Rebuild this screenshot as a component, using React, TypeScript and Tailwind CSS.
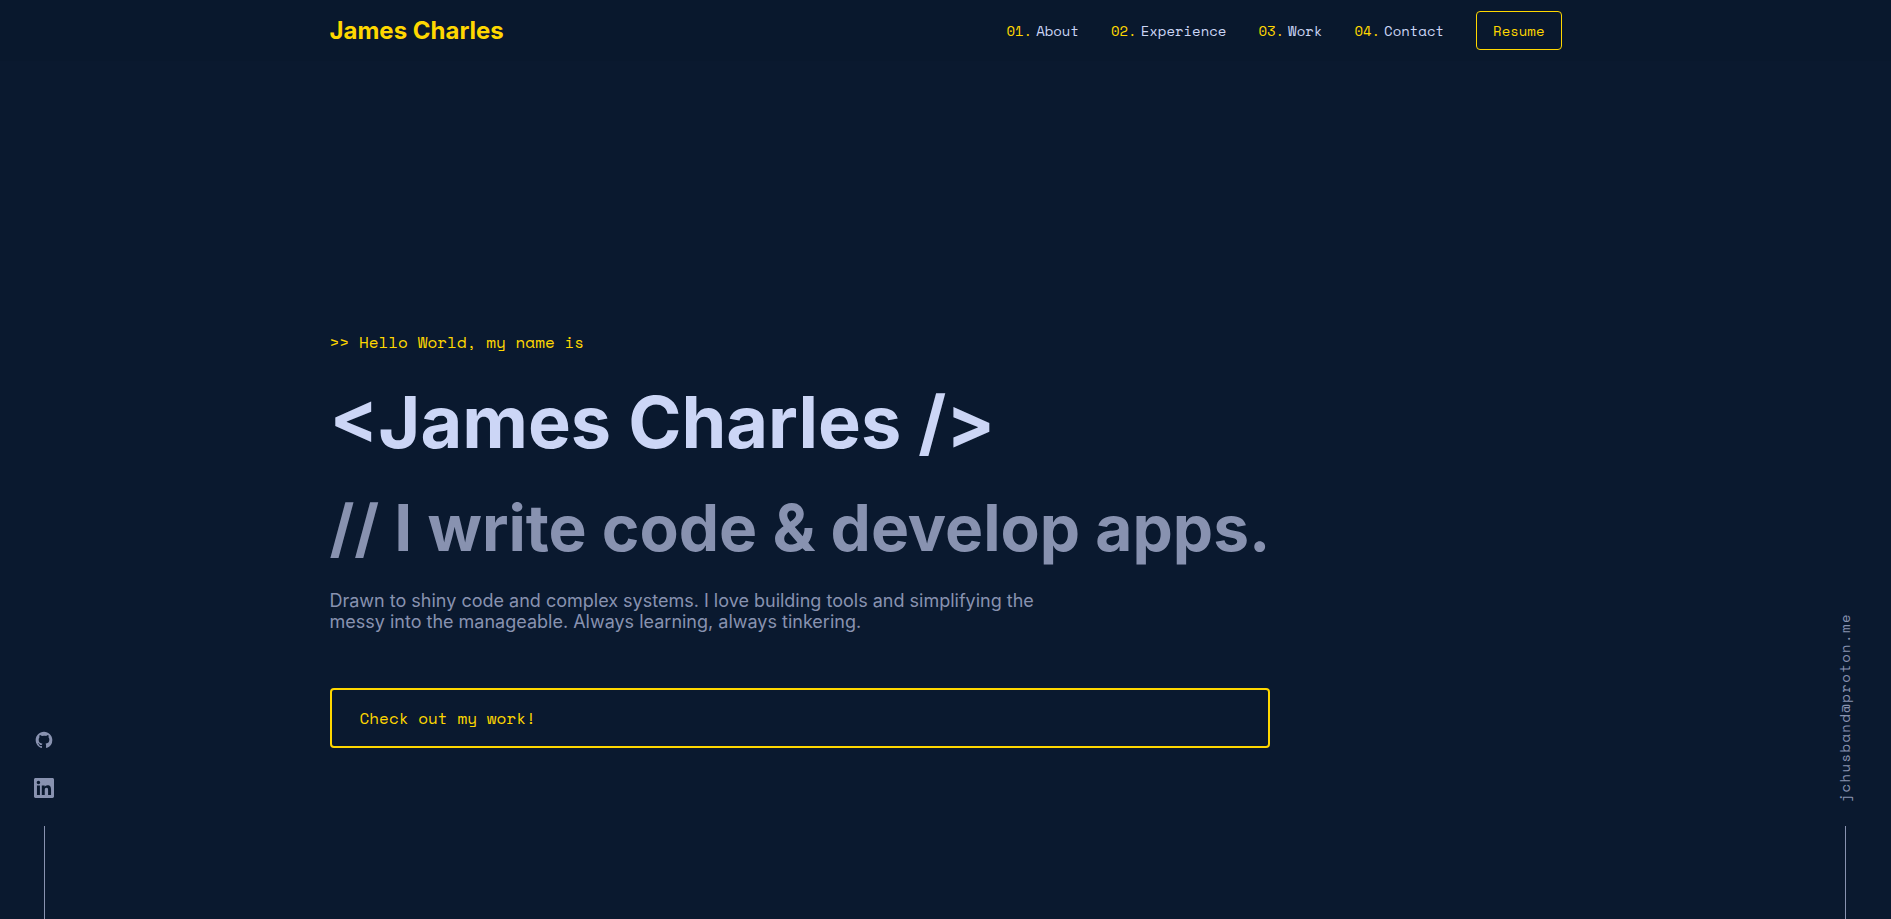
const mono = "font-['Space_Mono','DejaVu_Sans_Mono',monospace]";

const links = [
  { number: "01.", label: "About", href: "#about" },
  { number: "02.", label: "Experience", href: "#experience" },
  { number: "03.", label: "Work", href: "#work" },
  { number: "04.", label: "Contact", href: "#contact" },
];

function GithubIcon() {
  return (
    <svg viewBox="0 0 24 24" fill="currentColor" aria-hidden="true" className="size-5">
      <path
        fillRule="evenodd"
        clipRule="evenodd"
        d="M12 2C6.477 2 2 6.484 2 12.017c0 4.425 2.865 8.18 6.839 9.504.5.092.682-.217.682-.483 0-.237-.008-.868-.013-1.703-2.782.605-3.369-1.343-3.369-1.343-.454-1.158-1.11-1.466-1.11-1.466-.908-.62.069-.608.069-.608 1.003.07 1.531 1.032 1.531 1.032.892 1.53 2.341 1.088 2.91.832.092-.647.35-1.088.636-1.338-2.22-.253-4.555-1.113-4.555-4.951 0-1.093.39-1.988 1.029-2.688-.103-.253-.446-1.272.098-2.65 0 0 .84-.27 2.75 1.026A9.564 9.564 0 0112 6.844c.85.004 1.705.115 2.504.337 1.909-1.296 2.747-1.027 2.747-1.027.546 1.379.202 2.398.1 2.651.64.7 1.028 1.595 1.028 2.688 0 3.848-2.339 4.695-4.566 4.943.359.309.678.92.678 1.855 0 1.338-.012 2.419-.012 2.747 0 .268.18.58.688.482A10.019 10.019 0 0022 12.017C22 6.484 17.522 2 12 2z"
      />
    </svg>
  );
}

function LinkedinIcon() {
  return (
    <svg viewBox="0 0 24 24" fill="currentColor" aria-hidden="true" className="size-5">
      <path d="M20.447 20.452h-3.554v-5.569c0-1.328-.027-3.037-1.852-3.037-1.853 0-2.136 1.445-2.136 2.939v5.667H9.351V9h3.414v1.561h.046c.477-.9 1.637-1.85 3.37-1.85 3.601 0 4.267 2.37 4.267 5.455v6.286zM5.337 7.433c-1.144 0-2.063-.926-2.063-2.065 0-1.138.92-2.063 2.063-2.063 1.14 0 2.064.925 2.064 2.063 0 1.139-.925 2.065-2.064 2.065zm1.782 13.019H3.555V9h3.564v11.452zM22.225 0H1.771C.792 0 0 .774 0 1.729v20.542C0 23.227.792 24 1.771 24h20.451C23.2 24 24 23.227 24 22.271V1.729C24 .774 23.2 0 22.222 0h.003z" />
    </svg>
  );
}

function Header() {
  return (
    <header className="bg-[#09182d]">
      <div className="mx-auto flex w-full max-w-[1280px] items-center justify-between px-6 py-[11px]">
        <a href="#home" className="text-2xl leading-8 font-bold text-[#ffd700]">
          James Charles
        </a>
        <nav className={`flex items-center gap-8 text-sm leading-[21px] text-[#ccd6f6] ${mono}`}>
          {links.map((link) => (
            <a key={link.label} href={link.href} className="flex gap-1">
              <span className="text-[#ffd700]">{link.number}</span>
              {link.label}
            </a>
          ))}
          <a
            href="#resume"
            className="rounded border border-[#ffd700] px-4 py-2 text-[#ffd700]"
          >
            Resume
          </a>
        </nav>
      </div>
    </header>
  );
}

function Hero() {
  return (
    <section id="home" className="mx-auto flex w-full max-w-[1280px] px-6 pt-[98px]">
      <div className="flex w-fit flex-col">
        <p className={`mb-7 text-base leading-6 text-[#ffd700] ${mono}`}>
          &gt;&gt; Hello World, my name is
        </p>
        <h1 className="mb-7 text-[72px] leading-[80px] font-bold text-[#ccd6f6]">
          &lt;James Charles /&gt;
        </h1>
        <h2 className="mb-6 text-[64px] leading-[76px] font-bold text-[#8892b0]">
          // I write code &amp; develop apps.
        </h2>
        <p className="mb-14 max-w-[720px] text-lg leading-[21px] text-[#8892b0]">
          Drawn to shiny code and complex systems. I love building tools and simplifying the messy
          into the manageable. Always learning, always tinkering.
        </p>
        <a
          href="#work"
          className={`rounded border-2 border-[#ffd700] px-7 py-4 text-base leading-6 text-[#ffd700] ${mono}`}
        >
          Check out my work!
        </a>
      </div>
    </section>
  );
}

export default function App() {
  return (
    <div className="flex min-h-screen flex-col bg-[#0a192f] font-['Inter',sans-serif]">
      <Header />
      <div className="flex flex-1">
        <aside className="flex w-[90px] shrink-0 flex-col items-center justify-end pr-0.5 text-[#8892b0]">
          <a href="#github" aria-label="GitHub" className="mb-7">
            <GithubIcon />
          </a>
          <a href="#linkedin" aria-label="LinkedIn" className="mb-7">
            <LinkedinIcon />
          </a>
          <div className="h-[93px] w-px bg-[#8892b0]" />
        </aside>
        <main className="flex min-w-0 flex-1 items-center">
          <Hero />
        </main>
        <aside className="flex w-[90px] shrink-0 flex-col items-center justify-end pr-0.5 text-[#8892b0]">
          <a
            href="mailto:jchusband@proton.me"
            className={`mb-6 rotate-180 text-sm leading-5 tracking-widest [writing-mode:vertical-rl] ${mono}`}
          >
            jchusband@proton.me
          </a>
          <div className="h-[93px] w-px bg-[#8892b0]" />
        </aside>
      </div>
    </div>
  );
}
